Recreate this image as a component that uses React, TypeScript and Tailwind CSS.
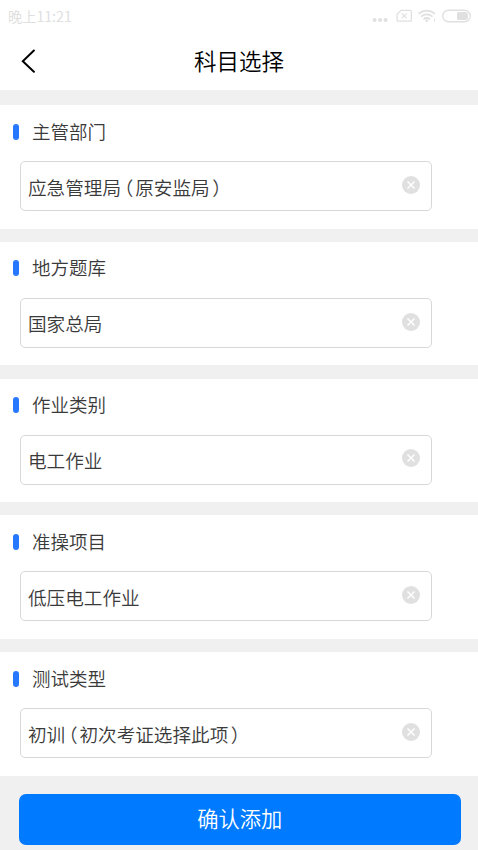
const FIELDS = [
  { label: '主管部门', value: '应急管理局（原安监局）' },
  { label: '地方题库', value: '国家总局' },
  { label: '作业类别', value: '电工作业' },
  { label: '准操项目', value: '低压电工作业' },
  { label: '测试类型', value: '初训（初次考证选择此项）' },
];

function StatusBar() {
  return (
    <div className="h-8 pl-2 pr-[7.5px] flex items-center justify-between text-[#e0e0e0]">
      <span className="text-[14.2px] leading-8 font-normal">晚上11:21</span>
      <svg width="99" height="16" viewBox="0 0 99 16" fill="none" stroke="currentColor">
        <g fill="currentColor" stroke="none">
          <circle cx="2.6" cy="12" r="2" />
          <circle cx="8.1" cy="12" r="2" />
          <circle cx="13.6" cy="12" r="2" />
        </g>
        <path d="M29.1 2.4h9.3q1 0 1 1v8.8q0 1-1 1H26.1q-1 0-1-1V6.3z" strokeWidth="1.3" />
        <path d="M29.9 5.4l4.8 4.8M34.7 5.4l-4.8 4.8" strokeWidth="1.2" />
        <path d="M46.5 5.8q8.3-6.4 16.6 0M49 8.6q5.8-4.3 11.6 0M51.5 11.2q3.3-2.4 6.6 0" strokeWidth="1.8" />
        <circle cx="54.8" cy="12.8" r="1.3" fill="currentColor" stroke="none" />
        <path d="M62.5 10.5v3" />
        <rect x="70.7" y="2.2" width="27.6" height="11.6" rx="5.8" strokeWidth="1.4" />
        <path d="M86.5 4H93q3 0 3 3v2q0 3-3 3h-6.5q-1.5 0-1.5-1.5v-5Q85 4 86.5 4z" fill="currentColor" stroke="none" />
      </svg>
    </div>
  );
}

// Full-width brackets are trimmed to half width and spaced by margins
function FieldText({ text }: { text: string }) {
  return (
    <span className="pt-px whitespace-nowrap">
      {text.split(/([（）])/).map((part, idx) => {
        if (part === '（') {
          return <span key={idx} className="inline-block ml-[3.2px] mr-[1.8px] [font-feature-settings:'halt']">{part}</span>;
        }
        if (part === '）') {
          return <span key={idx} className="inline-block ml-[2.5px] [font-feature-settings:'halt']">{part}</span>;
        }
        return part;
      })}
    </span>
  );
}

function Field({ label, value }: { label: string; value: string }) {
  return (
    <section className="h-[123.5px] bg-white pt-[13px]">
      <h2 className="flex items-center h-[27px] pl-[13px] text-[18.5px] leading-[27px] font-[350] text-[#3a3a3a]">
        <span className="w-[5.5px] h-4 mr-[13.5px] rounded-full bg-[#2878ff]" />
        <span className="pb-px">{label}</span>
      </h2>
      <div className="mt-[16px] ml-5 w-[411.5px] h-[50px] pl-[7px] pr-[10.3px] flex items-center justify-between rounded-[5px] border border-[#d8d8d8] text-[18.6px] font-[350] text-[#3a3a3a]">
        <FieldText text={value} />
        <button className="mb-[2.5px]" aria-label="清除">
          <svg width="18" height="18" viewBox="0 0 18 18">
            <circle cx="9" cy="9" r="9" fill="#e0e0e0" />
            <path d="M5.5 5.5l7 7M12.5 5.5l-7 7" stroke="#fff" strokeWidth="1.5" />
          </svg>
        </button>
      </div>
    </section>
  );
}

export default function App() {
  return (
    <div className="h-[850px] overflow-hidden bg-[#f0f0f0] font-['Noto_Sans_CJK_SC',sans-serif]">
      <header className="h-[90px] bg-white">
        <StatusBar />
        <div className="grid grid-cols-[1fr_auto_1fr] items-center h-[58px] pl-[20.5px] pr-[20.5px]">
          <svg width="15" height="24" viewBox="0 0 15 24" fill="none" stroke="#000" strokeWidth="2">
            <path d="M12.9 1.5L1.8 12.3l11.1 10.5" strokeLinecap="round" />
          </svg>
          <h1 className="pb-[2px] text-[22.5px] leading-8 font-[350] text-black">科目选择</h1>
        </div>
      </header>

      <main className="mt-[15px] flex flex-col gap-[13.3px]">
        {FIELDS.map((field) => (
          <Field key={field.label} label={field.label} value={field.value} />
        ))}
      </main>

      <div className="pt-[18.5px] pl-[18.5px] pr-[17px]">
        <button className="w-full h-[50.5px] pb-[2px] rounded-[7px] bg-[#007aff] text-[21.3px] font-[350] text-white">确认添加</button>
      </div>
    </div>
  );
}
